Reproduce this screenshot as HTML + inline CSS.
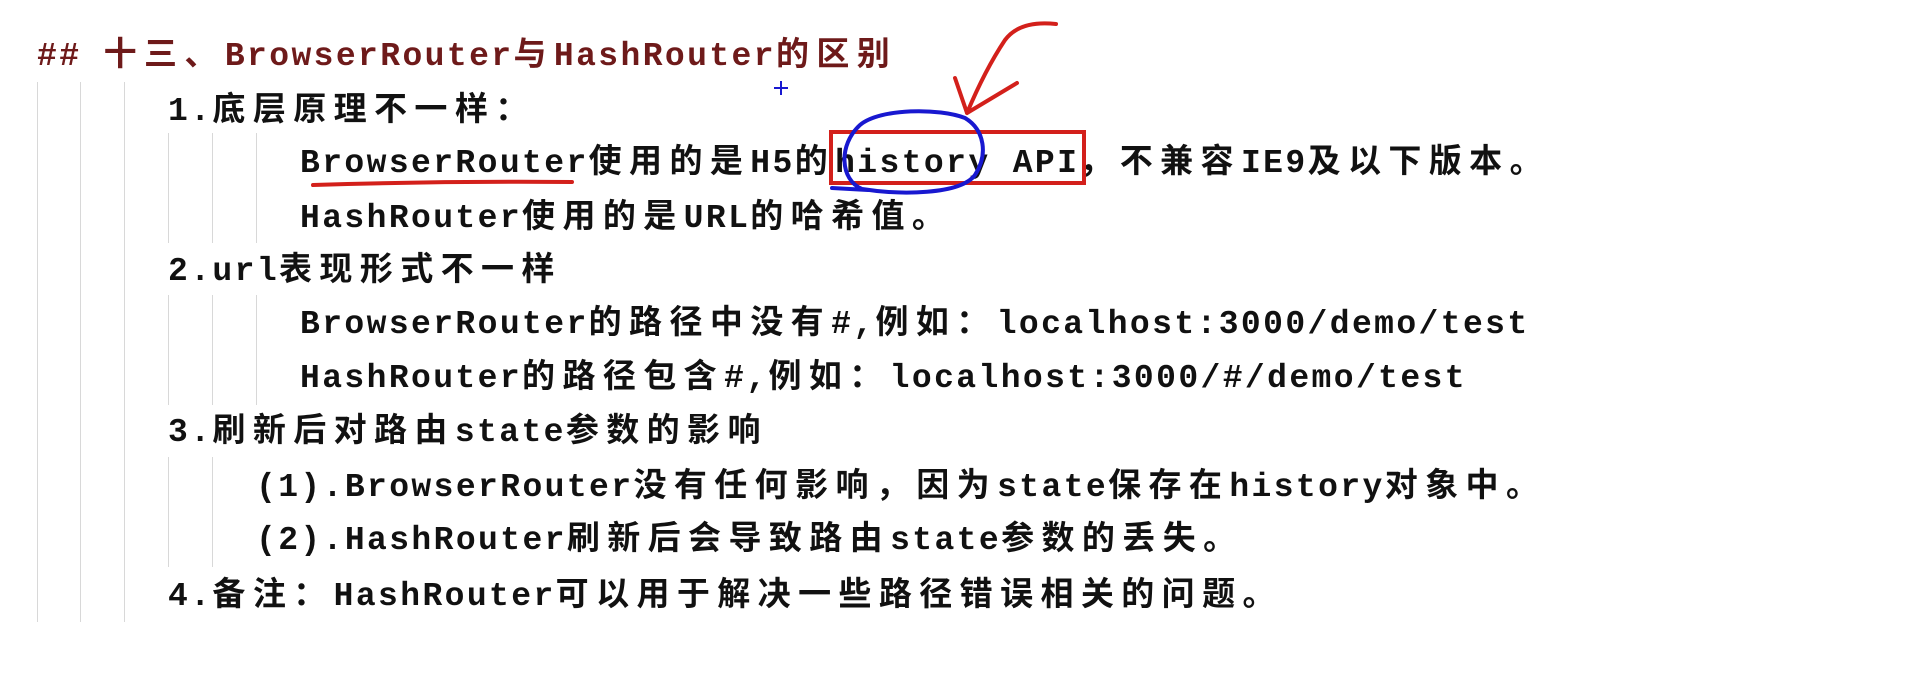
<!DOCTYPE html>
<html><head><meta charset="utf-8"><style>
body{margin:0;width:1914px;height:696px;background:#fff;position:relative;overflow:hidden;font-family:"Liberation Mono","Noto Sans CJK SC",monospace;font-weight:bold;font-size:33px;color:#111;}
.t{position:absolute;white-space:nowrap;letter-spacing:2.4px;line-height:40px;height:40px;}
.t i{font-style:normal;font-family:"Noto Sans CJK SC",sans-serif;font-size:33px;letter-spacing:7.4px;font-weight:bold;}
.v{position:absolute;width:1px;background:#d8d8d8;}
</style></head><body>
<div class="v" style="left:37px;top:82px;height:540px"></div>
<div class="v" style="left:80px;top:82px;height:540px"></div>
<div class="v" style="left:124px;top:82px;height:540px"></div>
<div class="v" style="left:168px;top:133px;height:110px"></div>
<div class="v" style="left:212px;top:133px;height:110px"></div>
<div class="v" style="left:256px;top:133px;height:110px"></div>
<div class="v" style="left:168px;top:295px;height:110px"></div>
<div class="v" style="left:212px;top:295px;height:110px"></div>
<div class="v" style="left:256px;top:295px;height:110px"></div>
<div class="v" style="left:168px;top:457px;height:110px"></div>
<div class="v" style="left:212px;top:457px;height:110px"></div>

<div class="t" style="left:37px;top:31px;color:#6e1a1a">## <i>十三、</i>BrowserRouter<i>与</i>HashRouter<i>的区别</i></div>
<div class="t" style="left:168px;top:86px">1.<i>底层原理不一样：</i></div>
<div class="t" style="left:300px;top:138px">BrowserRouter<i>使用的是</i>H5<i>的</i>history API<i>，不兼容</i>IE9<i>及以下版本。</i></div>
<div class="t" style="left:300px;top:193px">HashRouter<i>使用的是</i>URL<i>的哈希值。</i></div>
<div class="t" style="left:168px;top:246px">2.url<i>表现形式不一样</i></div>
<div class="t" style="left:300px;top:299px">BrowserRouter<i>的路径中没有</i>#,<i>例如：</i>localhost:3000/demo/test</div>
<div class="t" style="left:300px;top:353px">HashRouter<i>的路径包含</i>#,<i>例如：</i>localhost:3000/#/demo/test</div>
<div class="t" style="left:168px;top:407px">3.<i>刷新后对路由</i>state<i>参数的影响</i></div>
<div class="t" style="left:256px;top:462px">(1).BrowserRouter<i>没有任何影响，因为</i>state<i>保存在</i>history<i>对象中。</i></div>
<div class="t" style="left:256px;top:515px">(2).HashRouter<i>刷新后会导致路由</i>state<i>参数的丢失。</i></div>
<div class="t" style="left:168px;top:571px">4.<i>备注：</i>HashRouter<i>可以用于解决一些路径错误相关的问题。</i></div>

<svg width="1914" height="696" style="position:absolute;left:0;top:0" fill="none">
<rect x="831" y="132" width="253" height="51" stroke="#d3201b" stroke-width="4"/>
<path d="M313 185 Q440 181 572 182" stroke="#d3201b" stroke-width="4" stroke-linecap="round"/>
<path d="M1056 24 Q1020 20 1005 40 Q985 70 967 113 M967 113 L955 78 M967 113 L1017 83" stroke="#d3201b" stroke-width="4" stroke-linecap="round"/>
<path d="M965 118 C940 108 880 108 860 125 C838 145 840 180 862 189 C900 195 960 195 975 175 C988 155 985 130 965 118 M832 188 L868 190" stroke="#1818d0" stroke-width="4" stroke-linecap="round"/>
<path d="M781 81 V95 M774 88 H788" stroke="#1818d0" stroke-width="2"/>
</svg>
</body></html>
